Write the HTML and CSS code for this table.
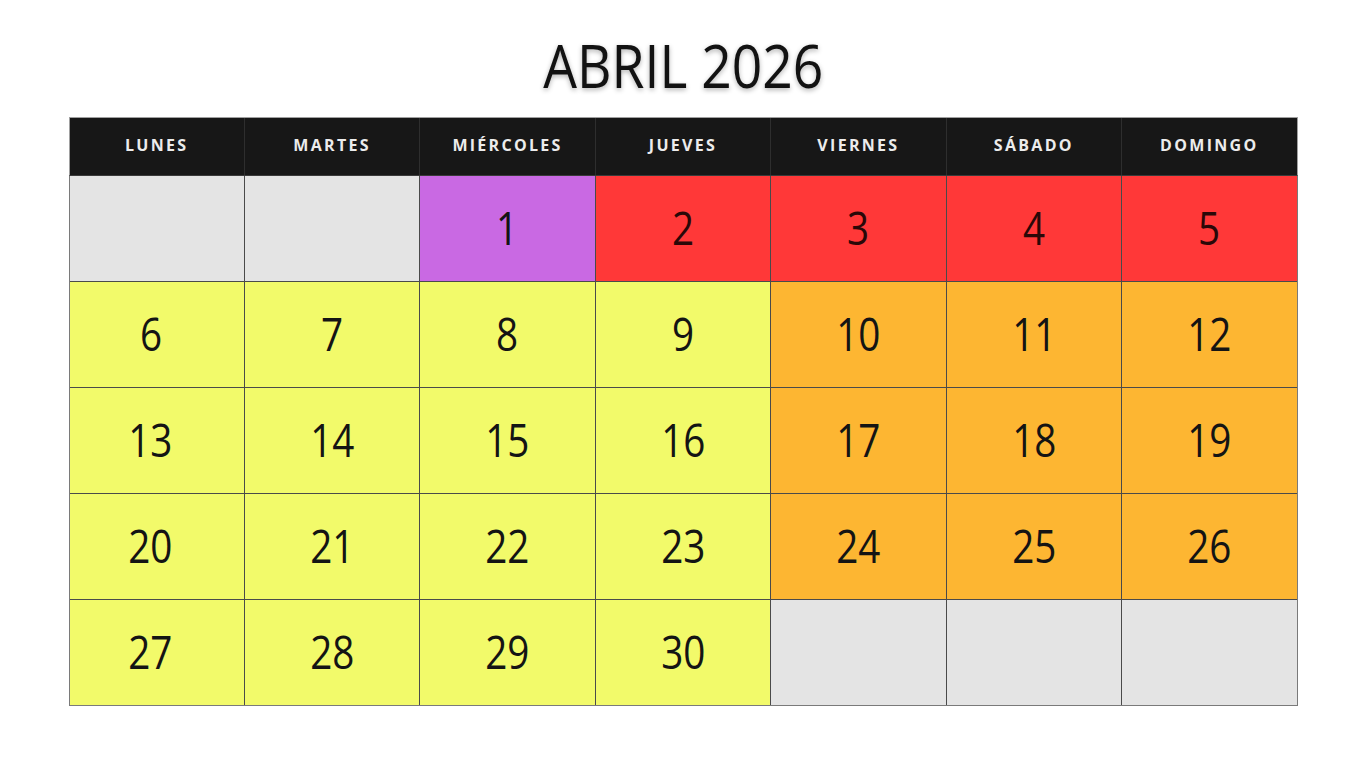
FILE: index.html
```html
<!DOCTYPE html>
<html lang="es">
<head>
<meta charset="utf-8">
<title>Abril 2026</title>
<link rel="stylesheet" href="styles.css">
</head>
<body>
<main class="page">
  <h1 class="title">ABRIL 2026</h1>
  <section class="calendar">
    <div class="head">
      <div class="hcell">LUNES</div>
      <div class="hcell">MARTES</div>
      <div class="hcell">MIÉRCOLES</div>
      <div class="hcell">JUEVES</div>
      <div class="hcell">VIERNES</div>
      <div class="hcell">SÁBADO</div>
      <div class="hcell">DOMINGO</div>
    </div>
    <div class="body">
      <div class="day empty"></div>
      <div class="day empty"></div>
      <div class="day purple"><span class="num">1</span></div>
      <div class="day red"><span class="num">2</span></div>
      <div class="day red"><span class="num">3</span></div>
      <div class="day red"><span class="num">4</span></div>
      <div class="day red"><span class="num">5</span></div>

      <div class="day yellow first"><span class="num">6</span></div>
      <div class="day yellow"><span class="num">7</span></div>
      <div class="day yellow"><span class="num">8</span></div>
      <div class="day yellow"><span class="num">9</span></div>
      <div class="day orange"><span class="num">10</span></div>
      <div class="day orange"><span class="num">11</span></div>
      <div class="day orange"><span class="num">12</span></div>

      <div class="day yellow first"><span class="num">13</span></div>
      <div class="day yellow"><span class="num">14</span></div>
      <div class="day yellow"><span class="num">15</span></div>
      <div class="day yellow"><span class="num">16</span></div>
      <div class="day orange"><span class="num">17</span></div>
      <div class="day orange"><span class="num">18</span></div>
      <div class="day orange"><span class="num">19</span></div>

      <div class="day yellow first"><span class="num">20</span></div>
      <div class="day yellow"><span class="num">21</span></div>
      <div class="day yellow"><span class="num">22</span></div>
      <div class="day yellow"><span class="num">23</span></div>
      <div class="day orange"><span class="num">24</span></div>
      <div class="day orange"><span class="num">25</span></div>
      <div class="day orange"><span class="num">26</span></div>

      <div class="day yellow first"><span class="num">27</span></div>
      <div class="day yellow"><span class="num">28</span></div>
      <div class="day yellow"><span class="num">29</span></div>
      <div class="day yellow"><span class="num">30</span></div>
      <div class="day empty"></div>
      <div class="day empty"></div>
      <div class="day empty"></div>
    </div>
  </section>
</main>
</body>
</html>
```
FILE: styles.css
```css
* { box-sizing: border-box; }
html, body { margin: 0; padding: 0; background: #ffffff; }
body { font-family: "Open Sans", "Noto Sans", sans-serif; color: #141414; }

.page {
  display: flex;
  flex-direction: column;
  align-items: center;
  padding-top: 24px;
}

.title {
  margin: 0 0 11px 0;
  font-size: 60px;
  line-height: 82px;
  font-weight: 400;
  letter-spacing: 0;
  color: #121212;
  text-shadow: 0 2px 6px rgba(0, 0, 0, 0.3);
  transform: scaleX(0.89);
}

.calendar {
  width: 1229px;
  display: flex;
  flex-direction: column;
}

.head {
  display: grid;
  grid-template-columns: repeat(7, 1fr);
  gap: 1px;
  background: #2e2e2e;
  border: 1px solid #a0a0a0;
  border-bottom: none;
  height: 58px;
}

.hcell {
  background: #171717;
  color: #ececec;
  display: flex;
  align-items: center;
  justify-content: center;
  font-family: "Open Sans", sans-serif;
  font-weight: 700;
  font-size: 16px;
  letter-spacing: 2.3px;
  padding-bottom: 3px;
}

.body {
  display: grid;
  grid-template-columns: repeat(7, 1fr);
  grid-auto-rows: 105px;
  gap: 1px;
  background: #4a4a4a;
  border: 1px solid #7a7a7a;
  border-top: 1px solid #3a3a3a;
}

.day {
  display: flex;
  align-items: center;
  justify-content: center;
  padding-bottom: 4px;
}

.first { padding-right: 12px; }

.num {
  display: inline-block;
  font-family: "Open Sans", sans-serif;
  font-size: 46px;
  font-weight: 400;
  color: #141414;
  transform: scaleX(0.84);
  line-height: 1;
}

.empty { background: #e4e4e4; }
.purple { background: #c969e3; }
.red { background: #ff3838; }
.red .num { color: #2a0808; }
.yellow { background: #f2fa6a; }
.orange { background: #fdb632; }
```
